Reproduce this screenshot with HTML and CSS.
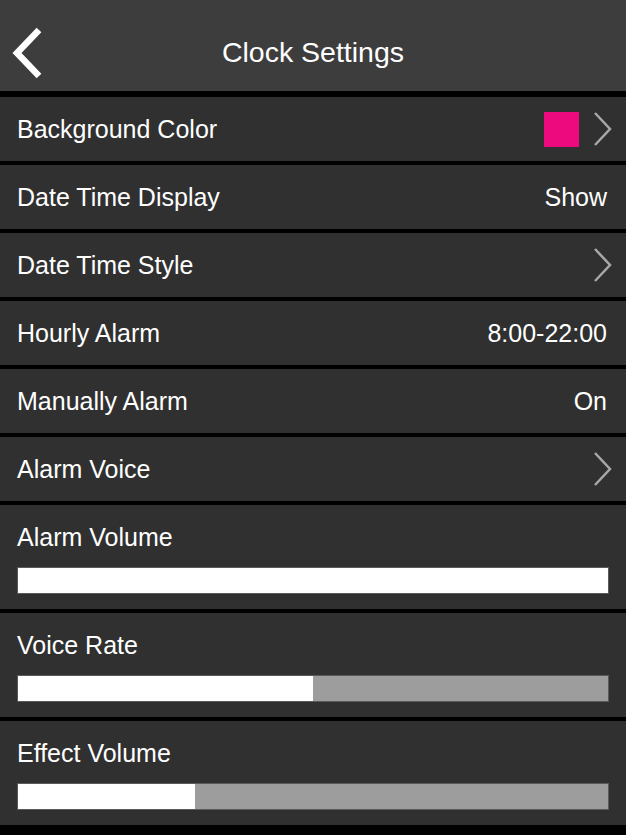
FILE: index.html
```html
<!DOCTYPE html>
<html lang="en">
<head>
  <meta charset="UTF-8">
  <meta name="viewport" content="width=device-width, initial-scale=1.0">
  <title>Clock Settings</title>
  <link rel="stylesheet" href="styles.css">
</head>
<body>
  <div class="header">
    <button class="back">
      <svg width="36" height="54" viewBox="0 0 36 54">
        <polyline points="30,4 8,27 30,50" fill="none" stroke="#fff" stroke-width="6.5" stroke-linecap="butt" stroke-linejoin="miter"/>
      </svg>
    </button>
    <h1>Clock Settings</h1>
  </div>

  <div class="list">
    <div class="row">
      <span class="label">Background Color</span>
      <span class="value">
        <span class="swatch"></span>
        <svg class="chevron" width="20" height="34" viewBox="0 0 20 34">
          <polyline points="2,1 17,17 2,33" fill="none" stroke="#a8a8a8" stroke-width="2.5"/>
        </svg>
      </span>
    </div>
    <div class="row">
      <span class="label">Date Time Display</span>
      <span class="value">Show</span>
    </div>
    <div class="row">
      <span class="label">Date Time Style</span>
      <span class="value">
        <svg class="chevron" width="20" height="34" viewBox="0 0 20 34">
          <polyline points="2,1 17,17 2,33" fill="none" stroke="#a8a8a8" stroke-width="2.5"/>
        </svg>
      </span>
    </div>
    <div class="row">
      <span class="label">Hourly Alarm</span>
      <span class="value">8:00-22:00</span>
    </div>
    <div class="row">
      <span class="label">Manually Alarm</span>
      <span class="value">On</span>
    </div>
    <div class="row">
      <span class="label">Alarm Voice</span>
      <span class="value">
        <svg class="chevron" width="20" height="34" viewBox="0 0 20 34">
          <polyline points="2,1 17,17 2,33" fill="none" stroke="#a8a8a8" stroke-width="2.5"/>
        </svg>
      </span>
    </div>

    <div class="slider-row">
      <span class="label">Alarm Volume</span>
      <div class="bar"><div class="fill" style="width: 100%"></div></div>
    </div>
    <div class="slider-row">
      <span class="label">Voice Rate</span>
      <div class="bar"><div class="fill" style="width: 50%"></div></div>
    </div>
    <div class="slider-row">
      <span class="label">Effect Volume</span>
      <div class="bar"><div class="fill" style="width: 30%"></div></div>
    </div>
  </div>
</body>
</html>
```

FILE: styles.css
```css
body {
  font-family: 'Liberation Sans', Arial, Helvetica, sans-serif;
  margin: 0;
  padding: 0;
  background-color: #000;
  color: #fff;
}

.header {
  position: relative;
  height: 91px;
  box-sizing: border-box;
  padding-top: 13px;
  background-color: #3d3d3d;
  display: flex;
  align-items: center;
  justify-content: center;
}

.header h1 {
  margin: 0;
  font-size: 28.5px;
  font-weight: normal;
}

.back {
  position: absolute;
  left: 9px;
  top: 26px;
  padding: 0;
  background: none;
  border: none;
  cursor: pointer;
}

.back svg {
  display: block;
}

.list {
  display: flex;
  flex-direction: column;
  gap: 4px;
  padding-top: 6px;
}

.row {
  height: 64px;
  background-color: #303030;
  display: flex;
  align-items: center;
  justify-content: space-between;
  padding: 0 13px 0 17px;
}

.label {
  font-size: 25px;
  line-height: 30px;
}

.value {
  display: flex;
  align-items: center;
  gap: 14px;
  font-size: 25px;
  padding-right: 6px;
}

.value:has(.chevron) {
  padding-right: 0;
}

.swatch {
  width: 35px;
  height: 35px;
  background-color: #ec0a7e;
}

.chevron {
  display: block;
}

.slider-row {
  height: 104px;
  box-sizing: border-box;
  background-color: #303030;
  padding: 17px 18px 0 17px;
  display: flex;
  flex-direction: column;
}

.bar {
  margin-top: 16px;
  margin-left: 1px;
  height: 25px;
  background-color: #9d9d9d;
  box-shadow: 0 0 0 1px #5a5a5a;
  display: flex;
}

.fill {
  height: 100%;
  background-color: #fff;
}
```
